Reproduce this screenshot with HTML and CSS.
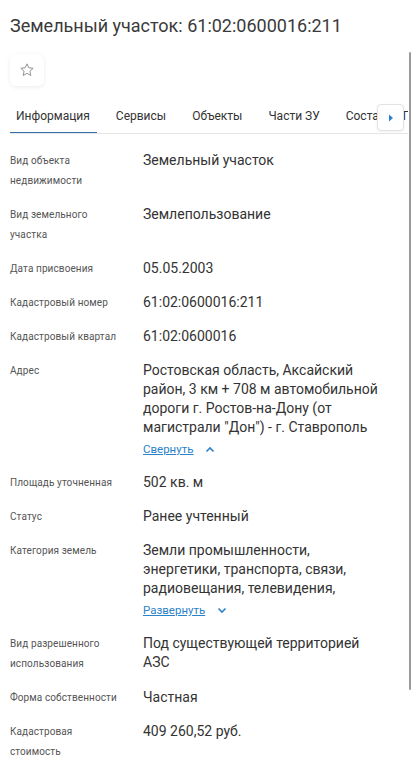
FILE: index.html
```html
<!DOCTYPE html>
<html lang="ru">
<head>
  <meta charset="UTF-8" />
  <title>Земельный участок: 61:02:0600016:211</title>
  <link rel="stylesheet" href="styles.css">
</head>
<body>
  <h1 class="title">Земельный участок: 61:02:0600016:211</h1>

  <button class="fav" type="button" aria-label="В избранное">
    <svg width="16" height="16" viewBox="0 0 24 24" fill="none" stroke="#8a8a8a" stroke-width="1.4" stroke-linejoin="round">
      <path d="M12 2.8l2.75 5.9 6.45.75-4.8 4.4 1.3 6.4L12 17l-5.7 3.25 1.3-6.4-4.8-4.4 6.45-.75z"/>
    </svg>
  </button>

  <div class="tabs-wrap">
    <nav class="tabs">
      <a class="tab active">Информация</a>
      <a class="tab">Сервисы</a>
      <a class="tab">Объекты</a>
      <a class="tab">Части ЗУ</a>
      <a class="tab">Состав ЕЗП</a>
    </nav>
    <button class="tabs-next" type="button" aria-label="Далее">
      <svg width="6" height="8" viewBox="0 0 6 8"><path d="M1 0.5L5 4 1 7.5z" fill="#2b82c9"/></svg>
    </button>
  </div>

  <dl class="info">
    <div class="row">
      <dt>Вид объекта<br>недвижимости</dt>
      <dd>Земельный участок</dd>
    </div>
    <div class="row">
      <dt>Вид земельного<br>участка</dt>
      <dd>Землепользование</dd>
    </div>
    <div class="row">
      <dt>Дата присвоения</dt>
      <dd>05.05.2003</dd>
    </div>
    <div class="row">
      <dt>Кадастровый номер</dt>
      <dd>61:02:0600016:211</dd>
    </div>
    <div class="row">
      <dt>Кадастровый квартал</dt>
      <dd>61:02:0600016</dd>
    </div>
    <div class="row">
      <dt>Адрес</dt>
      <dd>
        Ростовская область, Аксайский район, 3 км + 708 м автомобильной дороги г. Ростов-на-Дону (от магистрали "Дон") - г. Ставрополь
        <a class="toggle">Свернуть
          <svg width="10" height="7" viewBox="0 0 10 7"><path d="M1.5 5.5L5 2l3.5 3.5" fill="none" stroke="#2b82c9" stroke-width="1.6"/></svg>
        </a>
      </dd>
    </div>
    <div class="row">
      <dt>Площадь уточненная</dt>
      <dd>502 кв. м</dd>
    </div>
    <div class="row">
      <dt>Статус</dt>
      <dd>Ранее учтенный</dd>
    </div>
    <div class="row">
      <dt>Категория земель</dt>
      <dd>
        Земли промышленности, энергетики, транспорта, связи, радиовещания, телевидения,
        <a class="toggle">Развернуть
          <svg width="10" height="7" viewBox="0 0 10 7"><path d="M1.5 1.5L5 5l3.5-3.5" fill="none" stroke="#2b82c9" stroke-width="1.6"/></svg>
        </a>
      </dd>
    </div>
    <div class="row">
      <dt>Вид разрешенного<br>использования</dt>
      <dd>Под существующей территорией АЗС</dd>
    </div>
    <div class="row">
      <dt>Форма собственности</dt>
      <dd>Частная</dd>
    </div>
    <div class="row">
      <dt>Кадастровая<br>стоимость</dt>
      <dd>409 260,52 руб.</dd>
    </div>
  </dl>

  <div class="scroll-thumb"></div>
</body>
</html>
```

FILE: styles.css
```css
body {
  margin: 0;
  padding: 0 10px;
  background: #fff;
  color: #333;
  font-family: Roboto, 'Noto Sans', sans-serif;
}

.title {
  margin: 0;
  padding-top: 15px;
  font-size: 18px;
  line-height: 22px;
  font-weight: 400;
  color: #3a3a3a;
}

.fav {
  display: flex;
  align-items: center;
  justify-content: center;
  width: 34px;
  height: 32px;
  margin-top: 17px;
  padding: 0;
  border: none;
  border-radius: 6px;
  background: #fff;
  box-shadow: 0 1px 4px rgba(0, 0, 0, 0.08);
}

/* tab strip runs under the arrow button and is cut at the scrollbar */
.tabs-wrap {
  position: relative;
  margin: 14px -6px 0 0;
  border-bottom: 1px solid #e6e6e6;
}

.tabs {
  display: flex;
  gap: 13px;
  overflow: hidden;
  white-space: nowrap;
}

.tab {
  flex: none;
  padding: 8px 7px 8px 6px;
  font-size: 12px;
  line-height: 16px;
  color: #333;
  border-bottom: 2px solid transparent;
  margin-bottom: -1px;
}

.tab.active {
  border-bottom-color: #2f6ea8;
}

.tabs-next {
  position: absolute;
  right: 4px;
  top: 4px;
  width: 27px;
  height: 27px;
  padding: 0;
  display: flex;
  align-items: center;
  justify-content: center;
  background: #fff;
  border: 1px solid #e2e2e2;
  border-radius: 4px;
  box-shadow: 0 1px 3px rgba(0, 0, 0, 0.06);
}

.info {
  margin: 17px 0 0;
}

.row {
  display: grid;
  grid-template-columns: 133px 1fr;
  padding-bottom: 14px;
}

.row dt {
  font-size: 10px;
  line-height: 20px;
  color: #555;
  letter-spacing: 0.1px;
}

.row dd {
  margin: 0;
  font-size: 14px;
  line-height: 19px;
  color: #333;
  padding-right: 15px;
}

.toggle {
  display: flex;
  align-items: center;
  gap: 12px;
  margin-top: 2px;
  font-size: 11.5px;
  line-height: 20px;
  color: #2b82c9;
  text-decoration: underline;
}

.scroll-thumb {
  position: fixed;
  right: 1px;
  top: 52px;
  width: 2px;
  height: 638px;
  background: #9a9a9a;
  border-radius: 1px;
}
```
